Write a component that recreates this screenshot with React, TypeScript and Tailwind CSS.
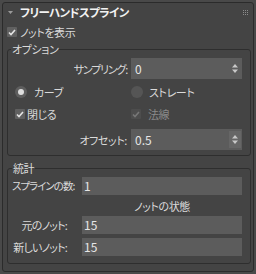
import React from "react";

const font = "font-['Noto_Sans_CJK_JP',sans-serif] [font-feature-settings:'palt']";

function Check({ disabled = false }: { disabled?: boolean }) {
  return (
    <span
      className={`flex h-[10px] w-[10px] shrink-0 items-center justify-center rounded-[1px] ${
        disabled ? "bg-[#4d4d4d]" : "bg-[#606060]"
      }`}
    >
      <svg width="8" height="7" viewBox="0 0 8 7">
        <polyline
          points="1,3.5 3,5.5 7,1"
          fill="none"
          stroke={disabled ? "#777" : "#e4e4e4"}
          strokeWidth="1.6"
        />
      </svg>
    </span>
  );
}

function Radio({ on = false }: { on?: boolean }) {
  return (
    <span
      className={`flex h-[12px] w-[12px] shrink-0 items-center justify-center rounded-full ${
        on ? "bg-[#5e5e5e]" : "bg-[#555555]"
      }`}
    >
      {on && <span className="h-[6px] w-[6px] rounded-full bg-[#dedede]" />}
    </span>
  );
}

function Spinner({ hover = false }: { hover?: boolean }) {
  return (
    <span
      className={`flex h-[17px] w-[12px] items-center justify-center ${
        hover ? "bg-[#666666]" : ""
      }`}
    >
      <svg width="6" height="9" viewBox="0 0 6 9">
        <polygon points="3,0 6,3.5 0,3.5" fill="#c8c8c8" />
        <polygon points="0,5.5 6,5.5 3,9" fill="#c8c8c8" />
      </svg>
    </span>
  );
}

function SpinInput({ value, hover = false }: { value: string; hover?: boolean }) {
  return (
    <div className="flex h-[21px] w-[111px] items-center justify-between bg-[#5c5c5c] pl-[4px] pr-[1px]">
      <span className="text-[12px] tracking-normal text-[#e6e6e6]">{value}</span>
      <Spinner hover={hover} />
    </div>
  );
}

function Field({ value }: { value: string }) {
  return (
    <div className="flex h-[18px] w-[160px] items-center bg-[#5c5c5c] pl-[2px]">
      <span className="text-[12px] tracking-normal text-[#e6e6e6]">{value}</span>
    </div>
  );
}

export default function App() {
  return (
    <div
      className={`h-[274px] w-[256px] overflow-hidden whitespace-nowrap bg-[#494949] p-[2px] text-[11px] leading-[14px] tracking-[-0.4px] text-[#dadada] ${font}`}
    >
      <div className="h-[270px] w-[252px] rounded-[3px] border border-[#2b2b2b] bg-[#444444]">
        {/* Header */}
        <div className="flex h-[18px] items-center justify-between pl-[5px] pr-[5px]">
          <div className="flex items-center">
            <svg width="5" height="3" viewBox="0 0 5 3" className="mt-[1px]">
              <polygon points="0,0 5,0 2.5,3" fill="#9a9a9a" />
            </svg>
            <span className="ml-[7px] text-[11.5px] font-bold tracking-[-0.6px] text-[#f2f2f2]">
              フリーハンドスプライン
            </span>
          </div>
          <div className="grid grid-cols-3 gap-[1px]">
            {Array.from({ length: 9 }).map((_, i) => (
              <span key={i} className="h-[1px] w-[1px] bg-[#8c8c8c]" />
            ))}
          </div>
        </div>

        {/* Show knots */}
        <div className="mt-[6px] flex h-[10px] items-center pl-[4px]">
          <Check />
          <span className="ml-[3px]">ノットを表示</span>
        </div>

        {/* Options */}
        <fieldset className="mt-[5px] ml-[4px] w-[244px] rounded-[3px] border border-[#2e2e2e] pb-[5px]">
          <legend className="ml-[3px] px-[1px] leading-[14px]">オプション</legend>

          <div className="mt-[2px] flex h-[21px] items-center">
            <span className="w-[119px] text-right tracking-[-1.2px]">サンプリング:</span>
            <div className="ml-[4px]">
              <SpinInput value="0" />
            </div>
          </div>

          <div className="mt-[7px] flex h-[12px] items-center">
            <div className="flex w-[123px] items-center pl-[7px]">
              <Radio on />
              <span className="ml-[7px]">カーブ</span>
            </div>
            <div className="flex items-center">
              <Radio />
              <span className="ml-[6px]">ストレート</span>
            </div>
          </div>

          <div className="mt-[11px] flex h-[10px] items-center">
            <div className="flex w-[123px] items-center pl-[7px]">
              <Check />
              <span className="ml-[2px]">閉じる</span>
            </div>
            <div className="flex items-center">
              <Check disabled />
              <span className="ml-[7px] text-[#8a8a8a]">法線</span>
            </div>
          </div>

          <div className="mt-[10px] flex h-[21px] items-center">
            <span className="w-[119px] text-right">オフセット:</span>
            <div className="ml-[4px]">
              <SpinInput value="0.5" hover />
            </div>
          </div>
        </fieldset>

        {/* Statistics */}
        <fieldset className="mt-[5px] ml-[4px] w-[244px] rounded-[3px] border border-[#2e2e2e] pb-[7px]">
          <legend className="ml-[4px] px-[1px] leading-[14px]">統計</legend>

          <div className="mt-[2px] flex h-[18px] items-center">
            <span className="w-[74px] pl-[4px] text-[10.5px] tracking-[-1px]">スプラインの数:</span>
            <Field value="1" />
          </div>

          <div className="mt-[2px] flex h-[18px] items-center">
            <span className="ml-[74px] w-[160px] text-center">ノットの状態</span>
          </div>

          <div className="mt-[1px] flex h-[18px] items-center">
            <span className="w-[59px] text-right tracking-[-0.8px]">元のノット:</span>
            <span className="w-[15px]" />
            <Field value="15" />
          </div>

          <div className="mt-[4px] flex h-[18px] items-center">
            <span className="w-[59px] text-right tracking-[-0.8px]">新しいノット:</span>
            <span className="w-[15px]" />
            <Field value="15" />
          </div>
        </fieldset>
      </div>
    </div>
  );
}
